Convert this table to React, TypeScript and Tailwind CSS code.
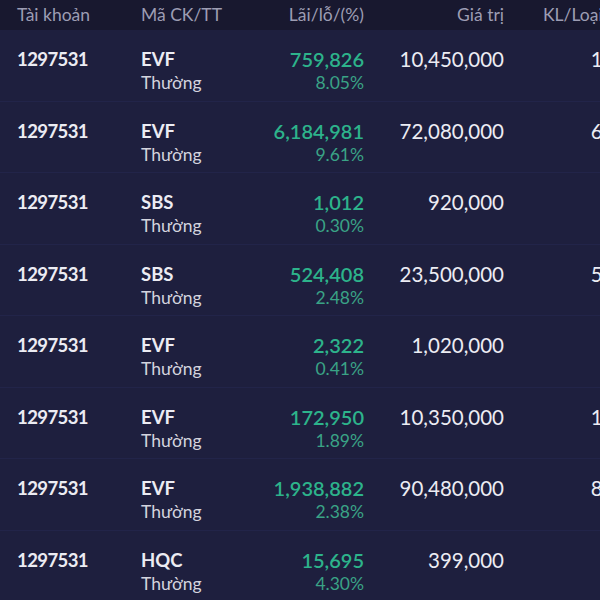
const rows = [
  { acc: '1297531', code: 'EVF', pl: '759,826', pct: '8.05%', value: '10,450,000', qty: '1,100' },
  { acc: '1297531', code: 'EVF', pl: '6,184,981', pct: '9.61%', value: '72,080,000', qty: '6,800' },
  { acc: '1297531', code: 'SBS', pl: '1,012', pct: '0.30%', value: '920,000', qty: '200' },
  { acc: '1297531', code: 'SBS', pl: '524,408', pct: '2.48%', value: '23,500,000', qty: '5,000' },
  { acc: '1297531', code: 'EVF', pl: '2,322', pct: '0.41%', value: '1,020,000', qty: '100' },
  { acc: '1297531', code: 'EVF', pl: '172,950', pct: '1.89%', value: '10,350,000', qty: '1,100' },
  { acc: '1297531', code: 'EVF', pl: '1,938,882', pct: '2.38%', value: '90,480,000', qty: '8,700' },
  { acc: '1297531', code: 'HQC', pl: '15,695', pct: '4.30%', value: '399,000', qty: '100' },
];

export default function App() {
  return (
    <div
      className="w-[600px] h-[600px] overflow-hidden bg-[#1e1f3e] text-[#ececf3]"
      style={{ fontFamily: 'Lato, "Noto Sans", sans-serif' }}
    >
      <div className="w-[720px]">
        {/* HEADER */}
        <div className="flex h-[30px] items-center bg-[#18182f] text-[17.5px] text-[#9d9db3]">
          <div className="w-[141px] pl-[17px]">Tài khoản</div>
          <div className="w-[120px]">Mã CK/TT</div>
          <div className="w-[103px] text-right">Lãi/lỗ/(%)</div>
          <div className="w-[140px] text-right">Giá trị</div>
          <div className="pl-[39px] whitespace-nowrap">KL/Loại lệnh</div>
        </div>

        {/* ROWS */}
        {rows.map((r, i) => (
          <div key={i} className="flex h-[71.5px] pt-[17px] border-b border-[#222449]">
            <div className="w-[141px] pl-[17px] text-[18.5px] tracking-[-0.6px] font-bold leading-[24px]">
              {r.acc}
            </div>
            <div className="w-[120px] leading-[24px]">
              <div className="text-[18.5px] font-bold">{r.code}</div>
              <div className="text-[17.5px] text-[#d4d4de]">Thường</div>
            </div>
            <div className="w-[103px] text-right leading-[24px]">
              <div className="text-[20px] font-semibold text-[#2db38b]">{r.pl}</div>
              <div className="text-[17.5px] text-[#3aa386]">{r.pct}</div>
            </div>
            <div className="w-[140px] text-right text-[20.5px] leading-[24px]">{r.value}</div>
            <div className="w-[139px] text-right text-[20.5px] leading-[24px]">{r.qty}</div>
          </div>
        ))}
      </div>
    </div>
  );
}
